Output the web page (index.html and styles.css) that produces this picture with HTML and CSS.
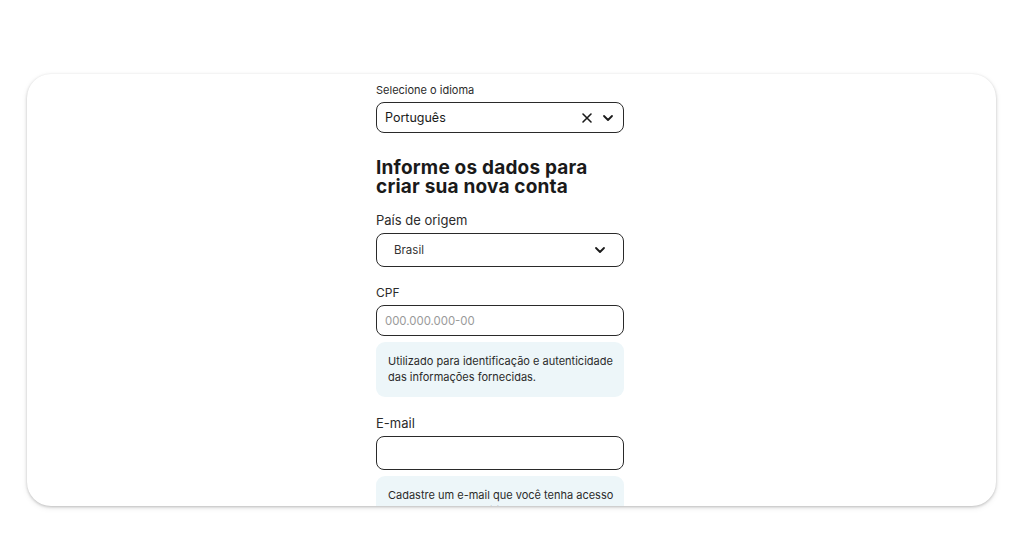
FILE: index.html
```html
<!DOCTYPE html>
<html lang="pt">
<head>
<meta charset="utf-8">
<title>Criar conta</title>
<link rel="stylesheet" href="styles.css">
</head>
<body>
<div class="page">
  <div class="card">
    <form class="form">
      <label class="label-sm">Selecione o idioma</label>
      <div class="field lang">
        <span class="value">Português</span>
        <span class="icons">
          <svg class="ico" width="12" height="12" viewBox="0 0 12 12"><path d="M2 2 L10 10 M10 2 L2 10" stroke="#1a1a1a" stroke-width="1.6" fill="none" stroke-linecap="round"/></svg>
          <svg class="ico" width="12" height="12" viewBox="0 0 12 12"><path d="M2 4 L6 8 L10 4" stroke="#1a1a1a" stroke-width="1.8" fill="none" stroke-linecap="round" stroke-linejoin="round"/></svg>
        </span>
      </div>
      <h1 class="title">Informe os dados para criar sua nova conta</h1>
      <label class="label">País de origem</label>
      <div class="field tall country">
        <span class="value small">Brasil</span>
        <svg class="ico" width="12" height="12" viewBox="0 0 12 12"><path d="M2 4 L6 8 L10 4" stroke="#1a1a1a" stroke-width="1.8" fill="none" stroke-linecap="round" stroke-linejoin="round"/></svg>
      </div>
      <label class="label cpf-label">CPF</label>
      <div class="field">
        <span class="placeholder">000.000.000-00</span>
      </div>
      <div class="hint">Utilizado para identificação e autenticidade das informações fornecidas.</div>
      <label class="label email-label">E-mail</label>
      <div class="field tall"></div>
      <div class="hint">Cadastre um e-mail que você tenha acesso para receber as notificações.</div>
    </form>
  </div>
</div>
</body>
</html>
```
FILE: styles.css
```css
* { box-sizing: border-box; }
html, body { margin: 0; padding: 0; background: #fff; }
body { font-family: Inter, "Noto Sans", sans-serif; color: #1a1a1a; }
.page { padding: 74px 28px 30px 27px; height: 536px; }
.card {
  height: 432px;
  background: #fff;
  border-radius: 24px;
  box-shadow: 0 1px 3px rgba(0,0,0,0.22), 0 2px 6px rgba(0,0,0,0.08);
  overflow: hidden;
  display: flex;
  justify-content: center;
}
.form {
  width: 248px;
  margin-right: 23px;
  padding-top: 9px;
  display: flex;
  flex-direction: column;
}
.label-sm { font-size: 11px; color: #2b2b2b; line-height: 14px; margin-bottom: 5px; }
.label { font-size: 13px; color: #2b2b2b; line-height: 16px; margin-bottom: 5px; }
.field {
  height: 31px;
  border: 1px solid #2a2a2a;
  border-radius: 8px;
  display: flex;
  align-items: center;
  justify-content: space-between;
  padding: 0 8px;
  flex-shrink: 0;
}
.field.tall { height: 34px; }
.value { font-size: 12.5px; color: #1a1a1a; }
.value.small { font-size: 11.5px; color: #333; padding-left: 9px; }
.country { padding-right: 17px; }
.icons { display: flex; gap: 9px; align-items: center; padding-right: 1px; }
.ico { display: block; }
.placeholder { font-size: 11.4px; color: #9a9a9a; }
.title {
  font-size: 19px;
  font-weight: 700;
  line-height: 19px;
  margin: 25px 0 16px;
  letter-spacing: 0.2px;
  color: #1a1a1a;
}
.cpf-label { margin-top: 18px; margin-bottom: 4px; font-size: 12px; }
.hint {
  margin-top: 6px;
  background: #edf6f9;
  border-radius: 9px;
  padding: 11px 8px 12px 12px;
  font-size: 11px;
  line-height: 16px;
  color: #2b2b2b;
  flex-shrink: 0;
}
.email-label { margin-top: 18px; }
```
